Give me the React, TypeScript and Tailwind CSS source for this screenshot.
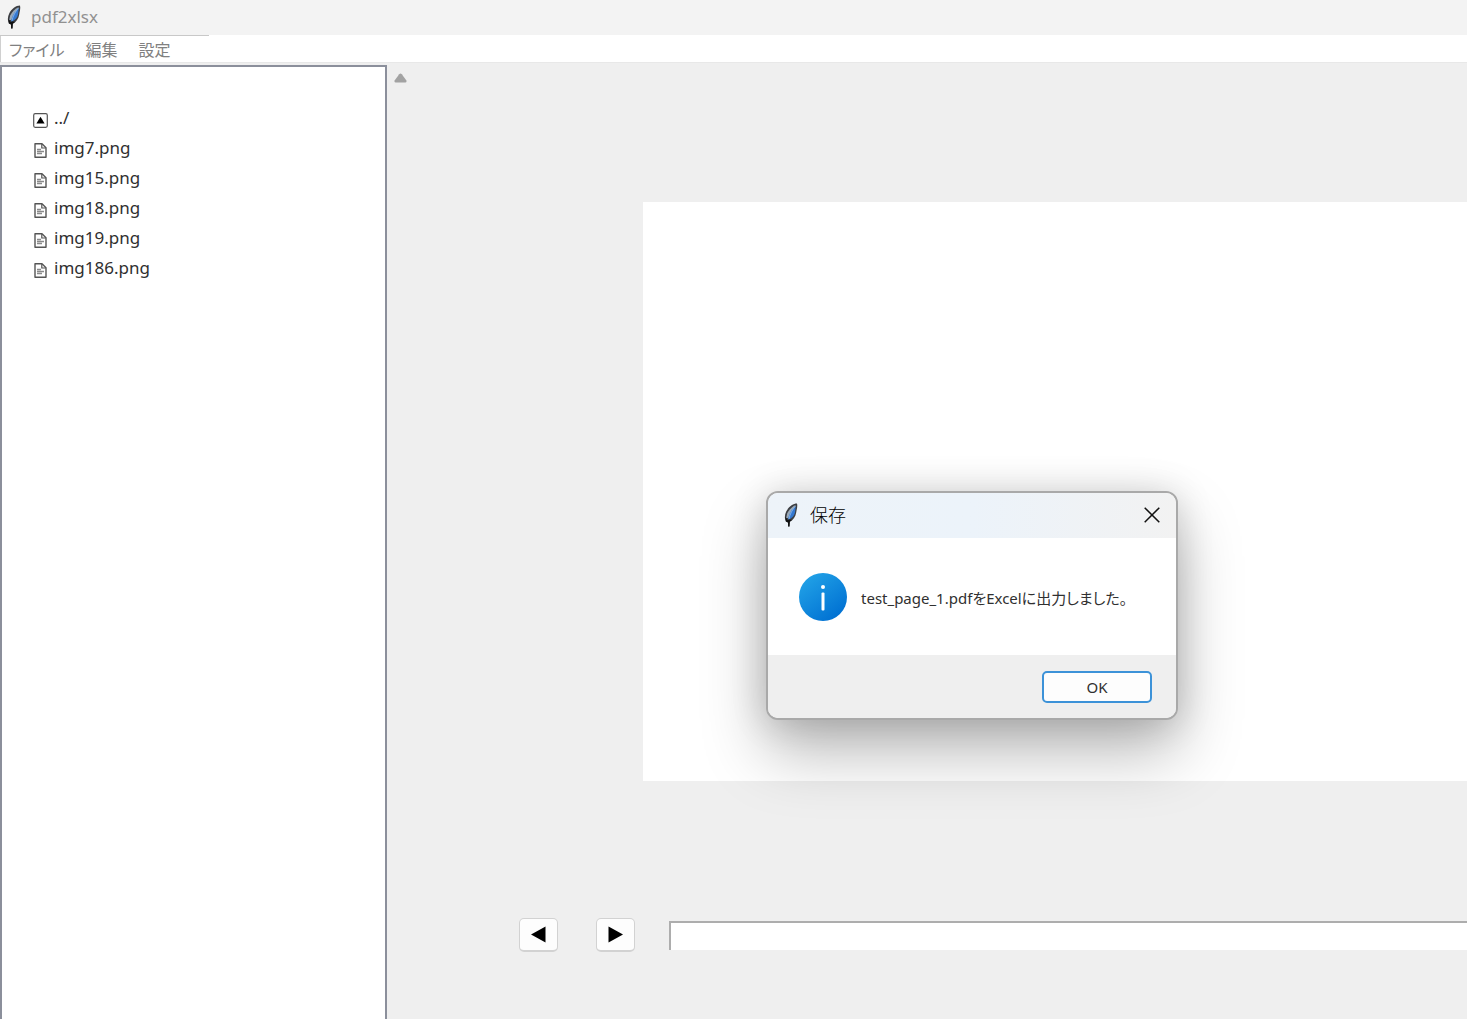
import React from "react";

const files = ["img7.png", "img15.png", "img18.png", "img19.png", "img186.png"];
const menus = ["ファイル", "編集", "設定"];

function Feather() {
  return (
    <svg viewBox="0 0 14 24" className="h-6 w-3.5 shrink-0" aria-hidden="true">
      <path
        d="M13 0.6 C9 0.6 4.4 4 2.2 8.6 C0.6 12 0.4 15.6 1.8 18.4 L4 19.4 L4.2 23.4 L5.4 23.4 L5.8 18.8 C9.2 17 11.6 13.4 12.2 9.4 C12.6 6.6 13.8 3.4 13 0.6 Z"
        fill="#3c3e42"
      />
      <path d="M11.8 2 C8.2 3.4 4.8 7 3.2 10.6 L2.2 15 L4.4 15 L8 9 Z" fill="#9aa9b8" />
      <path d="M11.8 3.4 C8 6 4.6 11 4 17 C8.2 15 10.4 12.4 11 9.4 Z" fill="#3478d0" />
      <path d="M11.6 3 C8.4 6.4 6 11 4.9 16" fill="none" stroke="#8fbcf0" strokeWidth="0.8" />
      <path d="M1.4 13.6 L2 18.4 L4 19.4 L4.2 23.6 L5.5 23.6 L5.8 18.8 L8 17 L5 16.4 L3.4 17 Z" fill="#111" />
    </svg>
  );
}

function UpFolderIcon() {
  return (
    <svg viewBox="0 0 15 15" className="size-[15px]" aria-hidden="true">
      <rect x="0.7" y="0.7" width="13.6" height="13.6" rx="1.5" fill="#fff" stroke="#555" strokeWidth="1.2" />
      <path d="M7.5 3.8 L11.6 10.6 H3.4 Z" fill="#000" />
    </svg>
  );
}

function FileIcon() {
  return (
    <svg viewBox="0 0 15 15" className="size-[15px]" aria-hidden="true">
      <path d="M2 0.8 H9 L13 4.8 V14.2 H2 Z" fill="#fff" stroke="#555" strokeWidth="1.4" strokeLinejoin="round" />
      <path d="M8.8 1 V5 H12.8" fill="none" stroke="#555" strokeWidth="1.2" />
      <path d="M4 6.5 H8 M4 8.5 H11 M4 10.5 H9" stroke="#8a8a8a" strokeWidth="1.6" />
    </svg>
  );
}

function InfoIcon() {
  return (
    <svg viewBox="0 0 48 48" className="size-12 shrink-0" aria-hidden="true">
      <defs>
        <linearGradient id="info" x1="0.15" y1="0.1" x2="0.8" y2="0.95">
          <stop offset="0" stopColor="#20a0e6" />
          <stop offset="1" stopColor="#0070d2" />
        </linearGradient>
      </defs>
      <circle cx="24" cy="24" r="24" fill="url(#info)" />
      <circle cx="24" cy="14" r="2" fill="#fff" />
      <rect x="22.5" y="19.5" width="3" height="18" rx="1" fill="#fff" />
    </svg>
  );
}

export default function App() {
  return (
    <div className="relative flex h-screen flex-col overflow-hidden bg-[#efefef] font-['Noto_Sans','Noto_Sans_CJK_JP',sans-serif] text-[#303030]">
      <header className="flex h-[35px] shrink-0 items-center gap-2.5 bg-[#f3f3f3] pb-0.5 pl-[7px]">
        <Feather />
        <h1 className="text-[17px] leading-6 text-[#919191]">pdf2xlsx</h1>
      </header>

      <nav className="flex h-7 shrink-0 flex-col border-b border-[#e8e8e8] bg-white">
        <div className="h-px w-[209px] shrink-0 bg-[#c8c8c8]" />
        <div className="flex flex-1 items-center gap-[21px] border-l border-[#d0d0d0] pt-px pl-2">
          {menus.map((m) => (
            <button key={m} type="button" className="text-[16px] leading-6 text-[#808080] [font-feature-settings:'palt']">
              {m}
            </button>
          ))}
        </div>
      </nav>

      <main className="flex min-h-0 flex-1 pt-0.5">
        <aside className="w-[387px] shrink-0 border-x-2 border-t-2 border-[#8b8f9b] bg-white pt-9 pl-[31px]">
          <ul>
            <li>
              <button type="button" className="flex h-[30px] items-center gap-1.5">
                <span className="pt-1"><UpFolderIcon /></span>
                <span className="text-[17px] leading-6">../</span>
              </button>
            </li>
            {files.map((f) => (
              <li key={f}>
                <button type="button" className="flex h-[30px] items-center gap-1.5">
                  <span className="pt-1"><FileIcon /></span>
                  <span className="text-[17px] leading-6">{f}</span>
                </button>
              </li>
            ))}
          </ul>
        </aside>

        <button type="button" aria-label="上へスクロール" className="ml-[7px] h-[26px] w-[13px] shrink-0">
          <svg viewBox="0 0 13 10" className="h-2.5 w-[13px]" aria-hidden="true">
            <path d="M5.2 1.2 Q6.5 0 7.8 1.2 L12.4 7.4 Q13 9.3 11.5 9.5 H1.5 Q0 9.3 0.6 7.4 Z" fill="#a2a2a2" />
          </svg>
        </button>

        <section className="flex min-w-0 flex-1 flex-col pt-[137px]">
          <div className="ml-[236px] h-[579px] shrink-0 bg-white" />
          <div className="mt-[137px] ml-28 flex items-center">
            <button type="button" aria-label="前のページ" className="flex h-[34px] w-[39px] items-center justify-center rounded-[5px] border border-b-2 border-[#d2d2d2] bg-[#fdfdfd]">
              <svg viewBox="0 0 15 17" className="h-[17px] w-[15px]" aria-hidden="true"><path d="M0 8.5 L14.5 0.5 V16.5 Z" fill="#000" /></svg>
            </button>
            <button type="button" aria-label="次のページ" className="ml-[38px] flex h-[34px] w-[39px] items-center justify-center rounded-[5px] border border-b-2 border-[#d2d2d2] bg-[#fdfdfd]">
              <svg viewBox="0 0 15 17" className="h-[17px] w-[15px]" aria-hidden="true"><path d="M15 8.5 L0.5 0.5 V16.5 Z" fill="#000" /></svg>
            </button>
            <input type="text" aria-label="ページ" className="ml-[34px] h-[29px] min-w-0 flex-1 border-t-2 border-l-2 border-[#adadad] bg-white px-1 outline-none" />
          </div>
        </section>
      </main>

      <div
        role="dialog"
        aria-labelledby="dialog-title"
        className="absolute top-[491px] left-[766px] flex w-[412px] flex-col overflow-hidden rounded-xl border-2 border-[#a9a9a9] bg-white shadow-[0_32px_64px_rgba(0,0,0,0.28),0_2px_36px_rgba(0,0,0,0.16)]"
      >
        <div className="flex h-[45px] items-center bg-linear-to-r from-[#edf3f9] via-[#ecf3fa] to-[#f2f2f2] px-4 pb-0.5">
          <Feather />
          <h2 id="dialog-title" className="ml-3 flex-1 text-[18px] leading-6 font-light text-black">保存</h2>
          <button type="button" aria-label="閉じる">
            <svg viewBox="0 0 16 16" className="size-4" aria-hidden="true">
              <path d="M0.7 0.7 L15.3 15.3 M15.3 0.7 L0.7 15.3" stroke="#111" strokeWidth="1.5" />
            </svg>
          </button>
        </div>
        <div className="flex h-[117px] items-center gap-3.5 pl-[31px] whitespace-nowrap">
          <InfoIcon />
          <p className="pt-0.5 text-[15px] leading-6 [font-feature-settings:'palt']">test_page_1.pdfをExcelに出力しました。</p>
        </div>
        <div className="flex h-[63px] items-center justify-end bg-[#efefef] pr-6">
          <button type="button" className="h-8 w-[110px] rounded-[5px] border-2 border-[#3c92d8] bg-[#fdfdfd] text-[15px] leading-6">OK</button>
        </div>
      </div>
    </div>
  );
}
